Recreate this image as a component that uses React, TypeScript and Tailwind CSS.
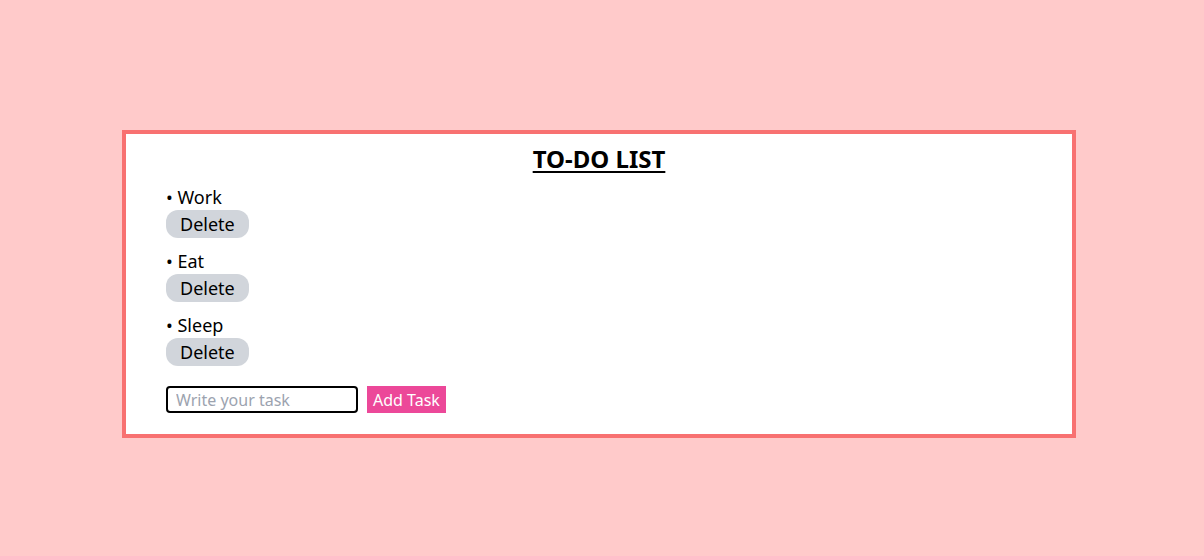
import React, { useState } from 'react';

const App: React.FC = () => {
    const [tasks, setTasks] = useState<string[]>(['Work', 'Eat', 'Sleep']);
    const [text, setText] = useState('');

    const addTask = () => {
        if (text.trim() === '') return;
        setTasks([...tasks, text]);
        setText('');
    };

    const deleteTask = (i: number) => {
        setTasks(tasks.filter((_, idx) => idx !== i));
    };

    return (
        <div className="min-h-screen bg-[#ffcaca] pt-[130px] font-['Segoe_UI','Noto_Sans',sans-serif]">
            <div className="ml-[122px] w-[954px] border-4 border-[#f87171] bg-white px-10 pt-[9px] pb-[21px]">
                <h1 className="text-center text-2xl font-bold underline underline-offset-[3px] text-black">TO-DO LIST</h1>
                <ul className="mt-[9px]">
                    {tasks.map((t, i) => (
                        <li key={i} className="mb-[10px] text-lg leading-[26px] text-black">
                            <div>• {t}</div>
                            <button
                                onClick={() => deleteTask(i)}
                                className="h-[28px] rounded-[12px] bg-[#d1d5db] px-[14px] text-lg leading-[28px]"
                            >
                                Delete
                            </button>
                        </li>
                    ))}
                </ul>
                <div className="mt-[20px] flex items-center gap-[9px]">
                    <input
                        type="text"
                        value={text}
                        placeholder="Write your task"
                        onChange={(e) => setText(e.target.value)}
                        className="h-[27px] w-[192px] rounded border-2 border-black px-2 text-base placeholder:text-[#9ca3af] outline-none"
                    />
                    <button onClick={addTask} className="h-[27px] bg-[#ec4899] px-[6px] text-base text-white">
                        Add Task
                    </button>
                </div>
            </div>
        </div>
    );
};

export default App;
